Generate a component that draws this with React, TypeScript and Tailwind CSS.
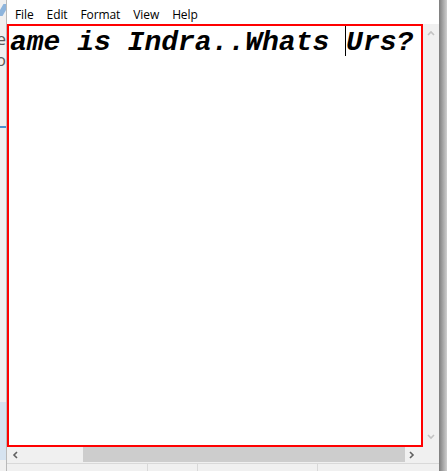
import React from 'react';

const menuItems = ['File', 'Edit', 'Format', 'View', 'Help'];

function Chevron({ dir, color }: { dir: 'up' | 'down' | 'left' | 'right'; color: string }) {
  const paths: Record<string, string> = {
    up: 'M1 5 L4 2 L7 5',
    down: 'M1 2 L4 5 L7 2',
    left: 'M5 1 L2 4 L5 7',
    right: 'M2 1 L5 4 L2 7',
  };
  return (
    <svg width="8" height="8" viewBox="0 0 8 8">
      <path d={paths[dir]} fill="none" stroke={color} strokeWidth="1.6" />
    </svg>
  );
}

export default function App(): JSX.Element {
  return (
    <div className="w-[447px] h-[471px] flex overflow-hidden bg-[#f0f0f0]">
      {/* bit of the window behind */}
      <div className="w-[7px] h-full flex flex-col overflow-hidden bg-[#f0f0f0] border-r border-[#b9b9b9]">
        <div className="h-[20px] flex justify-end items-center">
          <div className="w-[6px] h-[12px] bg-[#8db4dc] skew-x-[-30deg] shrink-0" />
        </div>
        <div className="flex justify-end h-[21px] mt-[8px] text-[17px] leading-[21px] text-[#5b5b5b] whitespace-nowrap [font-family:'Open_Sans',sans-serif]">
          <span className="shrink-0">Title</span>
        </div>
        <div className="flex justify-end h-[21px] text-[17px] leading-[21px] text-[#5b5b5b] whitespace-nowrap [font-family:'Open_Sans',sans-serif]">
          <span className="shrink-0">Co</span>
        </div>
        <div className="h-[2px] mt-[56px] bg-[#4f8fd0]" />
        <div className="flex-1" />
        <div className="h-[58px] bg-[#d6e3f0]" />
        <div className="h-[11px]" />
      </div>

      {/* notepad window */}
      <div className="w-[432px] h-full flex flex-col">
        <div className="h-[24px] bg-white flex items-center pl-[8px] pt-[6px] gap-[13px] text-[12px] tracking-[-0.1px] text-black [font-family:'Open_Sans',sans-serif]">
          {menuItems.map((m) => (
            <span key={m}>{m}</span>
          ))}
        </div>

        <div className="h-[423px] flex">
          <div className="w-[416px] h-full border-2 border-[#ff0000] bg-white overflow-hidden">
            <div className="pl-[1px] pt-[1px] whitespace-nowrap text-[28px] leading-[32px] font-bold italic text-black [font-family:'Liberation_Mono',monospace]">
              ame is Indra..Whats{' '}
              <span className="relative">
                <span className="absolute left-[-1px] top-[-2px] w-px h-[31px] bg-black" />
              </span>
              Urs?
            </div>
          </div>
          <div className="w-[16px] h-full bg-[#f0f0f0] flex flex-col justify-between items-center py-[6px]">
            <Chevron dir="up" color="#c2c2c2" />
            <Chevron dir="down" color="#c2c2c2" />
          </div>
        </div>

        <div className="h-[16px] flex items-center bg-[#f0f0f0]">
          <div className="w-[76px] h-full flex items-center pl-[5px]">
            <Chevron dir="left" color="#606060" />
          </div>
          <div className="w-[322px] h-[15px] self-start bg-[#cdcdcd]" />
          <div className="w-[18px] h-full flex items-center pl-[3px]">
            <Chevron dir="right" color="#606060" />
          </div>
        </div>

        <div className="h-[8px] flex border-t border-[#d9d9d9] bg-[#f0f0f0]">
          <div className="w-[141px] border-r border-[#d9d9d9]" />
          <div className="w-[50px] border-r border-[#d9d9d9]" />
          <div className="w-[120px] border-r border-[#d9d9d9]" />
          <div className="flex-1" />
        </div>
      </div>

      {/* right edge of window */}
      <div className="w-[8px] h-full bg-gradient-to-r from-[#7d7d7d] via-[#a6a6a6] to-[#cfcfcf]" />
    </div>
  );
}
